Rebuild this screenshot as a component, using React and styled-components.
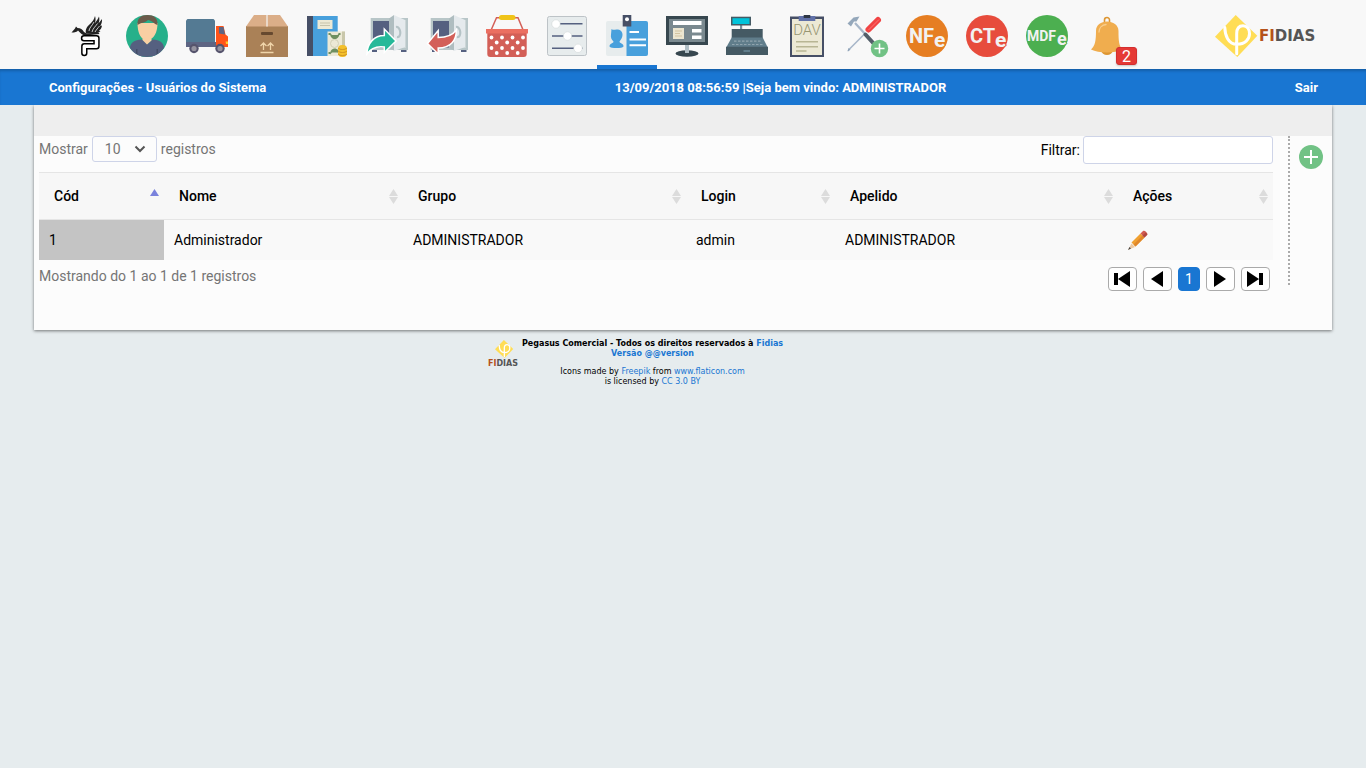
import React from "react";
import styled, { createGlobalStyle } from "styled-components";

const GlobalStyle = createGlobalStyle`
  *, *::before, *::after { box-sizing: border-box; }
  body {
    margin: 0;
    background: #e6ecee;
    color: #000;
    font-family: Roboto, "Liberation Sans", sans-serif;
    font-size: 14px;
    line-height: 20px;
  }
  a { text-decoration: none; }
  button, input, select { font: inherit; }
`;

const TopBar = styled.header`
  display: flex;
  align-items: center;
  justify-content: space-between;
  min-height: 69px;
  padding: 0 51px 0 57px;
  background: #f8f8f8;
`;

const Nav = styled.nav`
  display: flex;
  flex-wrap: wrap;
`;

const NavItem = styled.a`
  position: relative;
  display: flex;
  justify-content: center;
  width: 60px;
  height: 69px;
  padding-top: 15px;
  border-bottom: 4px solid ${(p) => (p.$active ? "#1976d2" : "transparent")};
`;

const Icon = styled.svg`
  display: block;
  flex: none;
  width: 42px;
  height: 42px;
  overflow: visible;
`;

const Badge = styled.span`
  position: absolute;
  right: 0;
  bottom: 0;
  width: 21px;
  height: 18px;
  border: 1px solid #d32f2f;
  border-radius: 3px;
  background: #e53935;
  box-shadow: 0 1px 2px rgba(0, 0, 0, 0.2);
  color: #fff;
  font-size: 16px;
  line-height: 17px;
  text-align: center;
`;

const BrandLogo = styled.svg`
  display: block;
  width: 100px;
  height: 42px;
  margin-top: 3px;
  overflow: visible;
`;

const StatusBar = styled.div`
  position: relative;
  display: flex;
  align-items: center;
  justify-content: space-between;
  min-height: 36px;
  padding: 2px 48px 0 49px;
  background: #1976d2;
  box-shadow: inset 0 3px 3px -1px rgba(0, 0, 0, 0.2);
  color: #fff;
  font-size: 13px;
  font-weight: 700;
`;

const LogoutLink = styled.a`
  color: #fff;
`;

const Main = styled.main`
  padding: 0 34px;
`;

const Card = styled.section`
  padding-bottom: 39px;
  background: #fcfcfc;
  box-shadow: 0 1px 3px rgba(0, 0, 0, 0.5);
`;

const CardStrip = styled.div`
  height: 31px;
  background: #eee;
`;

const CardBody = styled.div`
  display: flex;
  align-items: flex-start;
  gap: 15px;
  padding-left: 5px;
`;

const Listing = styled.div`
  flex: 1;
  min-width: 0;
`;

const Controls = styled.div`
  display: flex;
  justify-content: space-between;
  align-items: flex-start;
  height: 36px;
`;

const LengthLabel = styled.label`
  display: flex;
  align-items: center;
  gap: 4px;
  color: #757575;
`;

const SelectBox = styled.span`
  position: relative;
  display: block;
`;

const LengthSelect = styled.select`
  display: block;
  width: 65px;
  height: 26px;
  padding: 0 12px;
  appearance: none;
  border: 1px solid #ced4e8;
  border-radius: 3px;
  background: #fcfcfc;
  color: #757575;
`;

const Chevron = styled.svg`
  position: absolute;
  top: 9px;
  right: 11px;
  width: 12px;
  height: 8px;
  pointer-events: none;
`;

const FilterLabel = styled.label`
  display: flex;
  align-items: center;
  gap: 3px;
`;

const FilterInput = styled.input`
  width: 190px;
  height: 28px;
  padding: 0 8px;
  border: 1px solid #ced4e8;
  border-radius: 3px;
  background: #fff;
`;

const DataTable = styled.table`
  width: 100%;
  table-layout: fixed;
  border-collapse: separate;
  border-spacing: 0;
`;

const HeadCell = styled.th`
  height: 48px;
  padding: 0;
  border-top: 1px solid #e5e5e5;
  border-bottom: 1px solid #e5e5e5;
  background: #f7f7f7;
`;

const SortButton = styled.button`
  display: flex;
  align-items: center;
  justify-content: space-between;
  width: 100%;
  height: 46px;
  padding: 0 5px 0 15px;
  border: 0;
  background: none;
  color: #000;
  font-weight: 500;
  cursor: pointer;
`;

const SortMark = styled.svg`
  width: 9px;
  height: 15px;
`;

const Cell = styled.td`
  height: 40px;
  padding: 0 10px;
  background: ${(p) => (p.$sorted ? "#c4c4c4" : "#f9f9f9")};
`;

const EditButton = styled.button`
  display: block;
  padding: 0;
  border: 0;
  background: none;
  cursor: pointer;

  svg { display: block; width: 20px; height: 20px; }
`;

const TableFoot = styled.div`
  display: flex;
  justify-content: space-between;
  align-items: flex-start;
  padding: 6px 3px 0 0;
  color: #757575;
`;

const Pager = styled.nav`
  display: flex;
  gap: 6px;
  padding-top: 1px;
`;

const PageButton = styled.button`
  display: flex;
  align-items: center;
  justify-content: center;
  width: ${(p) => (p.$current ? "22px" : "29px")};
  height: 24px;
  padding: 0;
  border: 1px solid ${(p) => (p.$current ? "#1976d2" : "#aaa")};
  border-radius: 4px;
  background: ${(p) => (p.$current ? "#1976d2" : "#fff")};
  color: ${(p) => (p.$current ? "#fff" : "#000")};
  cursor: pointer;

  svg { display: block; width: 17px; height: 16px; }
`;

const SideTools = styled.aside`
  width: 44px;
  height: 149px;
  padding: 9px 0 0 9px;
  border-left: 2px dotted #aaa;
`;

const AddButton = styled.button`
  display: block;
  padding: 0;
  border: 0;
  background: none;
  cursor: pointer;

  svg { display: block; width: 24px; height: 24px; }
`;

const Footer = styled.footer`
  display: flex;
  align-items: flex-start;
  max-width: 390px;
  margin: 0 auto;
  padding-top: 9px;
  font-family: "DejaVu Sans", sans-serif;
  font-size: 8px;
  line-height: 10px;
`;

const FooterLogo = styled.svg`
  display: block;
  flex: none;
  width: 32px;
  height: 28px;
  margin: 1px 2px 0 0;
  overflow: visible;
`;

const Credits = styled.div`
  text-align: center;
  white-space: nowrap;
`;

const CreditLine = styled.p`
  margin: 0 0 8px;
  font-weight: ${(p) => (p.$strong ? 700 : 400)};
`;

const CreditLink = styled.a`
  color: #1976d2;
`;

const Safe = () => (
  <>
    <path fill="#556080" d="M6 34h5v3H6zM35 34h5.500v3H35z" />
    <path fill="#b8c6c8" d="M4.700 3H42v32H4.700z" />
    <path fill="#ccd6d7" d="M31 5h9v28h-9z" />
    <path fill="#556080" d="M7 6h17v26.500H7z" />
    <path fill="#afbdc0" d="M23 3.500L28 0v35.500L23 33z" />
    <path fill="#e5eaed" d="M28 0l11 5v27l-11 4z" />
    <path d="M30 12c5-1 6 11 1 10" fill="none" stroke="#b5c3c6" strokeWidth="2.200" />
  </>
);

const Phi = () => (
  <>
    <path fill="#ffdd55" d="M20.700 0L42.300 20.700 22.300 42 0 21.700z" />
    <path
      d="M9.800 12.500C10 20 13 29.300 22 29.300c8 0 12.500-5 12.500-10.500 0-5-2.500-8-6.500-8-4.500 0-6.300 3-6.300 8v20"
      fill="none"
      stroke="#fff"
      strokeWidth="3"
      strokeLinecap="round"
    />
  </>
);

const DocBadge = ({ color, label, size, x, y, eX, eSize, eY }) => (
  <>
    <circle cx="21" cy="21" r="21" fill={color} />
    <g fill="#f2f2f2" fontFamily="Roboto, sans-serif" fontWeight="700">
      <text x={x} y={y} fontSize={size}>{label}</text>
      <text x={eX} y={eY} fontSize={eSize} stroke={color} strokeWidth="2" paintOrder="stroke">e</text>
    </g>
  </>
);

const art = {
  pegasus: (
    <>
      <path fill="#222" d="M5.500 17.500L9 13.500l1-2 1.500 1.500c3 0 5 1.500 6.500 4l2.500 1.500 12-1 1 1.500-14 1.500c-4-.5-5.500-3-7.500-5-1 1.500-3 2-6.500 2z" />
      <path fill="#222" d="M20 18.500c-1-4 1-7 4-9.500 3-2.500 4-5 5-8 1 3 .5 5 0 7 1.500-2 3-4 4-6.500.8 3 .2 5-.5 7l3.500-4.500c.3 3-.7 5-1.700 7l1.700-.5c-.3 2.500-1.500 4-3 5.500l1.500.3c-2 1.700-4 2.200-7 2.200z" />
      <path d="M23 16c0-3 3-5 5-9M26 17c1-4 4-6 5.500-8.500M29 17c1-2 3-4 4.500-6" fill="none" stroke="#f8f8f8" strokeWidth=".8" />
      <path d="M18 23.300H30.500V31.300H18.300V38" fill="none" stroke="#000" strokeWidth="6.400" strokeLinecap="round" strokeLinejoin="round" />
      <path d="M18 23.300H30.500V31.300H18.300V38" fill="none" stroke="#fff" strokeWidth="3.400" strokeLinecap="round" strokeLinejoin="round" />
    </>
  ),
  person: (
    <>
      <circle cx="21" cy="21" r="21" fill="#26b08a" />
      <path fill="#556080" d="M4 33c0-5 4-8 12-8.500l5.500 4.500 5-4.500C34 25 38 28 38 33c-4 6-10 9-17 9S8 39 4 33z" />
      <path fill="#434c66" d="M10 34h1.500v5.500L10 38.500zM30.500 34H32v4.500l-1.500 1z" />
      <path fill="#f9cfa3" d="M11.500 8h20c0 7-2 13-6 15.500v2l-4.500 4-4.500-4.500v-1.500C13 21 11.500 14 11.500 8z" />
      <path fill="#6b5b4b" d="M11.500 10C11 3 15 0 21.500 0S32 3 31.500 10C28 9 27 6 22 5c-3 3-7 2.500-10.500 5z" />
    </>
  ),
  truck: (
    <>
      <path fill="#547a93" d="M1.500 4H27.500L29 5.500V27H0V5.500z" />
      <path fill="#5e6583" d="M0 27h30v5H0z" />
      <path fill="#ff5318" d="M30 11h7.500l2 8.500 2.500 2V32H30z" />
      <path fill="#5e6583" d="M33 12h4.500L39 19.500l-6-1z" />
      <path fill="#ffcb29" d="M39.500 26.500H42v2.500h-2z" />
      <circle cx="8" cy="33.500" r="4.700" fill="#56546d" />
      <circle cx="8" cy="33.500" r="2.600" fill="#96939f" />
      <circle cx="34" cy="33.500" r="4.700" fill="#56546d" />
      <circle cx="34" cy="33.500" r="2.600" fill="#96939f" />
    </>
  ),
  box: (
    <>
      <path fill="#aa8157" d="M0 11h42v31H0z" />
      <path fill="#dbae88" d="M8 0h26l8 11.500H0z" />
      <path fill="#ead8c8" d="M20 0h2v11.500h-2z" />
      <rect x="15" y="17" width="12" height="3" rx="1" fill="#66492f" />
      <path d="M17.500 35v-7M14.500 31l3-3 3 3M24.500 35v-7M21.500 31l3-3 3 3M14.500 37.500h13" fill="none" stroke="#f0d5aa" strokeWidth="1.300" />
    </>
  ),
  ledger: (
    <>
      <path fill="#48a0dc" d="M1 1h30.700v40H1z" />
      <path fill="#464f66" d="M1 1h6v40H1z" />
      <path fill="#ece9d5" d="M11.500 5h15v9h-15z" />
      <path d="M14 8h10M14 10.500h10" stroke="#c5c3ac" strokeWidth="1.200" />
      <path fill="#ece9d5" d="M21.500 16.500H39V41H21.500z" />
      <path fill="#c9c7ab" d="M36 16.500h3V41h-3z" />
      <path d="M24 18c0 8 9.500 8 9.500 0l-2 2h-5.500zM24 39.500c0-8 9.500-8 9.500 0l-2-2h-5.500z" fill="#6f9060" />
      <circle cx="28.500" cy="28.500" r="4" fill="none" stroke="#d2d0b5" />
      <path fill="#6f9060" d="M22.500 18h2v2h-2zM32.500 18h2v2h-2zM22.500 37h2v2h-2z" />
      <rect x="32" y="30" width="9" height="12" rx="4" fill="#f3c02b" />
      <path d="M32 33c2 2 7 2 9 0M32 36c2 2 7 2 9 0M32 39c2 2 7 2 9 0" fill="none" stroke="#d0941f" />
    </>
  ),
  safeOut: (
    <>
      <Safe />
      <path d="M.8 39C1.500 28 8 20.500 18.300 20.500V14l11.700 12-11.700 11.500V32C11 31 5 33 .8 39z" fill="#26b999" stroke="#fff" strokeWidth="1.500" />
    </>
  ),
  safeIn: (
    <>
      <Safe />
      <path d="M1.500 28.500L12.200 15.500v7C20 22.500 26 21 30.300 15 30.500 25 25 33 12.200 33v6z" fill="#d36059" stroke="#fff" strokeWidth="1.500" />
    </>
  ),
  basket: (
    <>
      <path d="M4.700 16L10.500 2.700h21.500L37.500 16" fill="none" stroke="#d35f57" strokeWidth="1.500" />
      <rect x="13" width="16.500" height="5" rx="2.500" fill="#f0c419" />
      <path fill="#d35f57" d="M1.300 17h39.400v22a3 3 0 0 1-3 3H4.300a3 3 0 0 1-3-3z" />
      <path fill="#eb6f61" d="M0 14h42v4.500H0z" />
      <g fill="#fff">
        {[22.5, 33].map((cy) => [5.5, 16, 26.5, 37].map((cx) => <circle key={`${cx}-${cy}`} cx={cx} cy={cy} r="1.900" />))}
        {[27.5, 38].map((cy) => [10.7, 21.2, 31.700].map((cx) => <circle key={`${cx}-${cy}`} cx={cx} cy={cy} r="1.900" />))}
      </g>
    </>
  ),
  sliders: (
    <>
      <rect x="1.500" y="1.500" width="39" height="39" rx="2" fill="#e7eced" stroke="#bdc3c7" />
      <path d="M6 8.700h30.500M6 21h30.500M6 33.200h30.500" stroke="#556080" strokeWidth="1.400" />
      <g fill="#fff" stroke="#ccd2d3" strokeWidth=".5">
        <circle cx="10" cy="9" r="4.200" />
        <circle cx="21.500" cy="21" r="4.200" />
        <circle cx="32" cy="33.300" r="4.200" />
      </g>
    </>
  ),
  idCard: (
    <>
      <rect y="6" width="42" height="35" rx="2" fill="#e7eced" />
      <path fill="#48a0dc" d="M20.500 6H40a2 2 0 0 1 2 2v31a2 2 0 0 1-2 2H20.500z" />
      <path fill="#48a0dc" d="M5.500 14c2 1.500 3 .5 5 .500 4 0 6 2 6 5.500 0 3-2 5-3 6.500 0 2 4 1.500 4 5-1 2-13 2-14 0 0-3.500 4-3 4-5-2-2-3-4-2.500-7z" />
      <path fill="#464f66" d="M16.700 0h8.600v11.500h-8.600z" />
      <circle cx="21" cy="4.300" r="2" fill="#fff" />
      <path d="M23.500 17H33M23.500 24.500H40M23.500 30.300H40" stroke="#fff" strokeWidth="2" />
    </>
  ),
  monitor: (
    <>
      <ellipse cx="21" cy="38.500" rx="11.500" ry="3.200" fill="#37474f" />
      <path fill="#b0bec5" d="M19 30h4v8h-4z" />
      <path fill="#37474f" d="M0 1h42v29H0z" />
      <path fill="#7a898f" d="M3 4h36v23H3z" />
      <path fill="#fff" d="M7 6h28.500v4H7zM26 14h9.500v3.500H26zM26 20.500h9.500V24H26z" />
      <path fill="#ece6d0" d="M7 13h11v11H7z" />
      <path d="M9 16h7M9 18.500h5M9 21h7" stroke="#d2c3a0" />
    </>
  ),
  register: (
    <>
      <path fill="#78909c" d="M14 10h2.200v5H14z" />
      <path fill="#455a64" d="M5 1.700h20V10.500H5z" />
      <path fill="#00c3da" d="M6.500 3.200h17V9h-17z" />
      <path fill="#455a64" d="M5.700 14h31v9h-31z" />
      <path fill="#607d8b" d="M5.700 22.500h31L41.500 32H.5z" />
      <path d="M8 26.200h27M6 29.500h31" stroke="#90a4ae" strokeWidth="1.200" strokeDasharray="2.500 1.500" />
      <path fill="#455a64" d="M0 31.700h42V40H0z" />
      <path fill="#607d8b" d="M17.500 35H24v2h-6.500z" />
    </>
  ),
  dav: (
    <>
      <path fill="#464f66" d="M4 1.500h34V42H4z" />
      <path fill="#ece9d5" d="M6 4h30v36H6z" />
      <path fill="#6171a8" d="M12.700 1h16.600v5H12.700z" />
      <path fill="#2e3644" d="M17.700 0h6.600v3h-6.600z" />
      <text x="21" y="20" fontFamily="Roboto, sans-serif" fontSize="15" fontWeight="300" textAnchor="middle" fill="#979672">DAV</text>
      <path d="M10 26.700h22M10 31.700h22M10 36h10.500" stroke="#b8b694" strokeWidth="1.500" />
    </>
  ),
  tools: (
    <>
      <path d="M3 34.500L19 18.500" stroke="#a7b6c8" strokeWidth="1.600" />
      <path d="M1.500 36l1-3 2 1.700L2 36.500z" fill="#8fa3b8" />
      <path d="M22.500 14.500L32 5" stroke="#f14343" strokeWidth="6" strokeLinecap="round" />
      <path d="M22.500 15L33 4.500" stroke="#ff7474" strokeWidth="1" />
      <path d="M9 8l11 12" stroke="#a7b6c8" strokeWidth="2.200" />
      <path d="M19.500 19.500L29 30" stroke="#535e69" strokeWidth="4" strokeLinecap="round" />
      <path d="M1.500 8.500L7.500 2.500 13.500 1.500 10.500 6.500 8 6.500 5 11.500z" fill="#94a7ba" />
      <circle cx="33.500" cy="33.500" r="8.700" fill="#71c285" />
      <path d="M33.500 28.500v10M28.500 33.500h10" stroke="#fff" strokeWidth="1.600" />
    </>
  ),
  nfe: <DocBadge color="#e67e22" label="NF" size="20" x="3" y="28" eX="28" eSize="21" eY="32" />,
  cte: <DocBadge color="#e74c3c" label="CT" size="20" x="4" y="28" eX="29" eSize="21" eY="32" />,
  mdfe: <DocBadge color="#4caf50" label="MDF" size="14" x="1" y="26" eX="31" eSize="18" eY="30" />,
  bell: (
    <>
      <path d="M18.500 8V5a2.500 2.500 0 0 1 5 0v3" fill="none" stroke="#dd9632" strokeWidth="1.600" />
      <path fill="#dd9632" d="M15.500 36a5.500 4 0 0 0 11 0z" />
      <path fill="#f0ad4e" d="M5 34.500C9 31 10 26 10 16c0-6 5-9.500 11-9.500S32.500 10 32.500 16c0 10 .5 15 4 18.500-5 2-9 3-15.500 3S9 36.500 5 34.500z" />
      <path d="M13 17c0-4 3-7 7-7.500" fill="none" stroke="#f8cd8b" strokeWidth="1.300" strokeLinecap="round" />
    </>
  ),
};

const menu = [
  { id: "pegasus", label: "Pegasus" },
  { id: "person", label: "Pessoas" },
  { id: "truck", label: "Fornecedores" },
  { id: "box", label: "Produtos" },
  { id: "ledger", label: "Financeiro" },
  { id: "safeOut", label: "Contas a receber" },
  { id: "safeIn", label: "Contas a pagar" },
  { id: "basket", label: "Compras" },
  { id: "sliders", label: "Parâmetros" },
  { id: "idCard", label: "Usuários do Sistema", active: true },
  { id: "monitor", label: "Terminal" },
  { id: "register", label: "Caixa" },
  { id: "dav", label: "Orçamentos" },
  { id: "tools", label: "Ordem de serviço" },
  { id: "nfe", label: "Nota fiscal" },
  { id: "cte", label: "Conhecimento de transporte" },
  { id: "mdfe", label: "Manifesto" },
  { id: "bell", label: "Notificações", count: 2 },
];

const columns = [
  { name: "Cód", width: 125, sorted: true },
  { name: "Nome", width: 239 },
  { name: "Grupo", width: 283 },
  { name: "Login", width: 149 },
  { name: "Apelido", width: 283 },
  { name: "Ações", width: 155 },
];

const users = [
  { id: 1, name: "Administrador", group: "ADMINISTRADOR", login: "admin", nick: "ADMINISTRADOR" },
];

const pages = [
  { label: "Primeira página", d: "M0 2h4v12H0zM16 0v16L4 8z" },
  { label: "Página anterior", d: "M14 0v16L2 8z" },
  { label: "1", current: true },
  { label: "Próxima página", d: "M2 0v16L14 8z" },
  { label: "Última página", d: "M0 0v16L12 8zM12 2h4v12h-4z" },
];

export default function App() {
  return (
    <>
      <GlobalStyle />
      <TopBar>
        <Nav aria-label="Menu principal">
          {menu.map((item) => (
            <NavItem key={item.id} href="#" $active={item.active} aria-label={item.label}>
              <Icon viewBox="0 0 42 42" aria-hidden="true">{art[item.id]}</Icon>
              {item.count && <Badge>{item.count}</Badge>}
            </NavItem>
          ))}
        </Nav>
        <BrandLogo viewBox="0 0 100 42" role="img" aria-label="Fidias">
          <Phi />
          <text x="44" y="26" fontFamily="DejaVu Sans, sans-serif" fontSize="15" fontWeight="700" fill="#555">
            <tspan fill="#b5521b">FI</tspan>DIAS
          </text>
        </BrandLogo>
      </TopBar>

      <StatusBar>
        <span>Configurações - Usuários do Sistema</span>
        <span>13/09/2018 08:56:59 |Seja bem vindo: ADMINISTRADOR</span>
        <LogoutLink href="#">Sair</LogoutLink>
      </StatusBar>

      <Main>
        <Card>
          <CardStrip />
          <CardBody>
            <Listing>
              <Controls>
                <LengthLabel htmlFor="length">
                  Mostrar
                  <SelectBox>
                    <LengthSelect id="length" defaultValue="10">
                      <option>10</option>
                      <option>25</option>
                      <option>50</option>
                    </LengthSelect>
                    <Chevron viewBox="0 0 12 8" aria-hidden="true">
                      <path d="M1.500 1.500L6 6l4.500-4.500" fill="none" stroke="#555" strokeWidth="2" />
                    </Chevron>
                  </SelectBox>
                  registros
                </LengthLabel>
                <FilterLabel htmlFor="filter">
                  Filtrar:
                  <FilterInput id="filter" type="search" />
                </FilterLabel>
              </Controls>

              <DataTable>
                <colgroup>
                  {columns.map((c) => <col key={c.name} width={c.width} />)}
                </colgroup>
                <thead>
                  <tr>
                    {columns.map((c) => (
                      <HeadCell key={c.name} scope="col">
                        <SortButton type="button">
                          {c.name}
                          <SortMark viewBox="0 0 9 15" aria-hidden="true">
                            <path d="M4.500 0L9 7H0z" fill={c.sorted ? "#7a82dc" : "#dcdcdc"} />
                            {!c.sorted && <path d="M0 8h9l-4.500 7z" fill="#dcdcdc" />}
                          </SortMark>
                        </SortButton>
                      </HeadCell>
                    ))}
                  </tr>
                </thead>
                <tbody>
                  {users.map((u) => (
                    <tr key={u.id}>
                      <Cell $sorted>{u.id}</Cell>
                      <Cell>{u.name}</Cell>
                      <Cell>{u.group}</Cell>
                      <Cell>{u.login}</Cell>
                      <Cell>{u.nick}</Cell>
                      <Cell>
                        <EditButton type="button" aria-label="Editar">
                          <svg viewBox="0 0 20 20" aria-hidden="true">
                            <path d="M0 20l3.500-6.500 3.500 3.500z" fill="#ecc9a2" />
                            <path d="M0 20l1.500-3 1.500 1.500z" fill="#444" />
                            <path d="M3.500 12.500L12.500 3.500l4 4L7.500 16.500z" fill="#f0a030" />
                            <path d="M5.500 14.500l9-9 2 2-9 9z" fill="#e0872a" />
                            <path d="M12.500 3.500l2.500-2.500c1.500-1.500 5.500 2.500 4 4l-2.500 2.500z" fill="#d25b50" />
                            <path d="M14.500 5.500l3-3 2 1.500-.5 1-2.500 2.500z" fill="#b14840" />
                          </svg>
                        </EditButton>
                      </Cell>
                    </tr>
                  ))}
                </tbody>
              </DataTable>

              <TableFoot>
                <span>Mostrando do 1 ao 1 de 1 registros</span>
                <Pager aria-label="Paginação">
                  {pages.map((p) => (
                    <PageButton key={p.label} type="button" $current={p.current} aria-label={p.label}>
                      {p.current ? p.label : (
                        <svg viewBox="0 0 17 16" aria-hidden="true"><path d={p.d} /></svg>
                      )}
                    </PageButton>
                  ))}
                </Pager>
              </TableFoot>
            </Listing>

            <SideTools>
              <AddButton type="button" aria-label="Adicionar usuário">
                <svg viewBox="0 0 24 24" aria-hidden="true">
                  <circle cx="12" cy="12" r="12" fill="#71c285" />
                  <path d="M12 5v14M5 12h14" stroke="#fff" strokeWidth="2" />
                </svg>
              </AddButton>
            </SideTools>
          </CardBody>
        </Card>
      </Main>

      <Footer>
        <FooterLogo viewBox="0 0 32 28" role="img" aria-label="Fidias">
          <g transform="translate(7 0) scale(0.430)"><Phi /></g>
          <text x="0" y="26" fontFamily="DejaVu Sans, sans-serif" fontSize="8" fontWeight="700" fill="#555">
            <tspan fill="#b5521b">FI</tspan>DIAS
          </text>
        </FooterLogo>
        <Credits>
          <CreditLine $strong>
            Pegasus Comercial - Todos os direitos reservados à <CreditLink href="#">Fidias</CreditLink>
            <br />
            <CreditLink href="#">Versão @@version</CreditLink>
          </CreditLine>
          <CreditLine>
            Icons made by <CreditLink href="#">Freepik</CreditLink> from <CreditLink href="#">www.flaticon.com</CreditLink>
            <br />
            is licensed by <CreditLink href="#">CC 3.0 BY</CreditLink>
          </CreditLine>
        </Credits>
      </Footer>
    </>
  );
}
